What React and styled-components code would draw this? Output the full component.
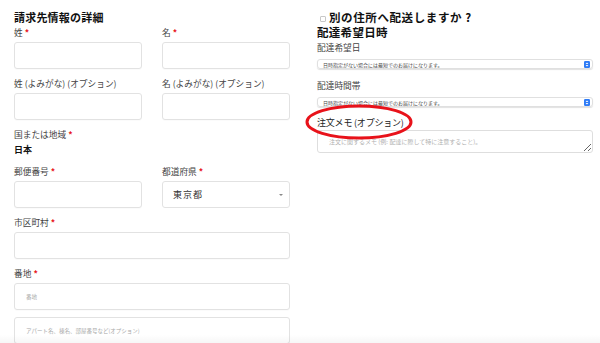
import React from "react";
import styled, { createGlobalStyle } from "styled-components";

const GlobalStyle = createGlobalStyle`
  html, body { margin: 0; padding: 0; background: #fff; }
  body {
    font-family: "Noto Sans CJK JP", "Noto Sans", "Liberation Sans", sans-serif;
    color: #333;
    overflow: hidden;
  }
  * { box-sizing: border-box; }
`;

const Page = styled.div`
  position: relative;
  width: 600px;
  height: 343px;
  overflow: hidden;
  display: grid;
  grid-template-columns: 276px 276px;
  column-gap: 27px;
  align-items: start;
  padding: 9px 0 0 14px;
  &::after {
    content: "";
    position: absolute;
    left: 0;
    right: 0;
    bottom: 0;
    height: 8px;
    background: linear-gradient(to bottom, rgba(0,0,0,0), rgba(0,0,0,0.035));
    pointer-events: none;
  }
`;

const Column = styled.div`
  display: flex;
  flex-direction: column;
`;

const SectionTitle = styled.h3`
  margin: 0 0 1px;
  font-size: 11px;
  line-height: 16px;
  font-weight: 700;
  color: #111;
  letter-spacing: 0.2px;
`;

const Row = styled.div`
  display: grid;
  grid-template-columns: 1fr 1fr;
  column-gap: 20px;
`;

const Field = styled.div`
  display: flex;
  flex-direction: column;
  margin-bottom: ${(p) => (p.$tight ? "7px" : "8px")};
`;

const Label = styled.label`
  display: block;
  font-size: ${(p) => (p.$size ? p.$size : "8.7px")};
  line-height: 14px;
  color: ${(p) => (p.$dark ? "#222" : "#444")};
  letter-spacing: ${(p) => (p.$dark ? "-0.2px" : "0")};
  margin-bottom: ${(p) => (p.$mb !== undefined ? p.$mb : "2px")};
  white-space: nowrap;
`;

const Req = styled.span`
  color: #e8161b;
  font-weight: 700;
  margin-left: 2px;
`;

const TextInput = styled.input`
  display: block;
  width: 100%;
  height: 27px;
  border: 1px solid #e2e2e2;
  border-radius: 3px;
  background: #fff;
  padding: 0 11px;
  font-family: inherit;
  font-size: 5.5px;
  color: #333;
  outline: none;
  box-shadow: 0 1px 1px rgba(0, 0, 0, 0.02);
  &::placeholder { color: #a8a8a8; }
`;

const Country = styled.div`
  font-size: 9px;
  line-height: 14px;
  font-weight: 700;
  color: #111;
  margin: 1px 0 8px;
`;

const SelectBox = styled.div`
  height: 27px;
  border: 1px solid #e2e2e2;
  border-radius: 3px;
  display: flex;
  align-items: center;
  justify-content: space-between;
  padding: 0 6px 0 10px;
  font-size: 9px;
  letter-spacing: 1px;
  color: #333;
`;

const Caret = styled.span`
  width: 0;
  height: 0;
  border-left: 2px solid transparent;
  border-right: 2px solid transparent;
  border-top: 2.5px solid #888;
`;

const CheckRow = styled.div`
  display: flex;
  align-items: center;
  gap: 3px;
  height: 16px;
  font-size: 11.5px;
  font-weight: 700;
  color: #111;
  letter-spacing: 0.6px;
  margin-left: 3px;
`;

const CheckBox = styled.span`
  width: 6px;
  height: 6px;
  border: 1px solid #c8c8c8;
  border-radius: 1px;
  margin-top: 3px;
  background: #fff;
`;

const SubTitle = styled.h4`
  margin: 0 0 1px;
  font-size: 11.5px;
  line-height: 15px;
  font-weight: 700;
  color: #111;
  letter-spacing: 0.3px;
`;

const MiniSelect = styled.div`
  height: 10px;
  border: 1px solid #e0e0e0;
  border-radius: 3px;
  box-shadow: 0 1px 1px rgba(0, 0, 0, 0.12);
  display: flex;
  align-items: center;
  justify-content: space-between;
  padding: 0 2px 0 5px;
  font-size: 5px;
  color: #444;
  margin-bottom: ${(p) => p.$mb};
  white-space: nowrap;
`;

const MemoWrap = styled.div`
  position: relative;
`;

const Ellipse = styled.svg`
  position: absolute;
  left: -12px;
  top: -12px;
  pointer-events: none;
`;

const TextArea = styled.textarea`
  display: block;
  width: 100%;
  height: 23px;
  border: 1px solid #dedede;
  border-radius: 3px;
  padding: 6px 11px;
  font-family: inherit;
  font-size: 6px;
  line-height: 9px;
  outline: none;
  resize: vertical;
  &::placeholder { color: #b0b0b0; }
`;

const UpDown = () => (
  <svg width="6" height="7" viewBox="0 0 6 7">
    <rect x="0" y="0" width="6" height="7" rx="1.2" fill="#2f7cf6" />
    <path d="M1.6 3 L3 1.5 L4.4 3 Z" fill="#fff" />
    <path d="M1.6 4 L3 5.5 L4.4 4 Z" fill="#fff" />
  </svg>
);

export default function App() {
  return (
    <>
      <GlobalStyle />
      <Page>
        <Column>
          <SectionTitle>請求先情報の詳細</SectionTitle>
          <Row>
            <Field>
              <Label>姓<Req>*</Req></Label>
              <TextInput />
            </Field>
            <Field>
              <Label>名<Req>*</Req></Label>
              <TextInput />
            </Field>
          </Row>
          <Row>
            <Field>
              <Label>姓 (よみがな) (オプション)</Label>
              <TextInput />
            </Field>
            <Field>
              <Label>名 (よみがな) (オプション)</Label>
              <TextInput />
            </Field>
          </Row>
          <Label $mb="0">国または地域<Req>*</Req></Label>
          <Country>日本</Country>
          <Row>
            <Field>
              <Label>郵便番号<Req>*</Req></Label>
              <TextInput />
            </Field>
            <Field>
              <Label>都道府県<Req>*</Req></Label>
              <SelectBox>
                東京都
                <Caret />
              </SelectBox>
            </Field>
          </Row>
          <Field>
            <Label>市区町村<Req>*</Req></Label>
            <TextInput />
          </Field>
          <Field $tight>
            <Label>番地<Req>*</Req></Label>
            <TextInput placeholder="番地" />
          </Field>
          <TextInput placeholder="アパート名、棟名、部屋番号など(オプション)" />
        </Column>

        <Column>
          <CheckRow>
            <CheckBox />
            別の住所へ配送しますか ?
          </CheckRow>
          <SubTitle>配達希望日時</SubTitle>
          <Label $mb="4px">配達希望日</Label>
          <MiniSelect $mb="10px">
            日時指定がない場合には最短でのお届けになります。
            <UpDown />
          </MiniSelect>
          <Label $mb="4px">配達時間帯</Label>
          <MiniSelect $mb="9px">
            日時指定がない場合には最短でのお届けになります。
            <UpDown />
          </MiniSelect>
          <MemoWrap>
            <Label $size="9px" $mb="0" $dark>注文メモ (オプション)</Label>
            <Ellipse width="112" height="38" viewBox="0 0 112 38">
              <ellipse cx="54" cy="18" rx="52" ry="16" fill="none" stroke="#e8121a" strokeWidth="3" />
            </Ellipse>
          </MemoWrap>
          <TextArea placeholder="注文に関するメモ (例: 配達に際して特に注意すること)。" />
        </Column>
      </Page>
    </>
  );
}
